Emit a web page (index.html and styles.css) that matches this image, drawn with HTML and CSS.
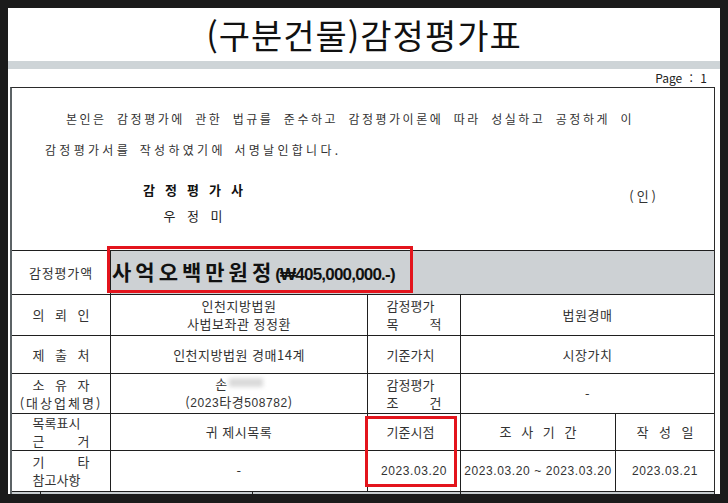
FILE: index.html
```html
<!DOCTYPE html>
<html lang="ko">
<head>
<meta charset="utf-8">
<title>(구분건물)감정평가표</title>
<link rel="stylesheet" href="styles.css">
</head>
<body>
<div class="sheet">
  <h1 class="title">(구분건물)감정평가표</h1>
  <div class="band"></div>
  <div class="pageno">Page : 1</div>
  <div class="box">
    <div class="oath">
      <p class="oath-text"><span class="l1">본인은 감정평가에 관한 법규를 준수하고 감정평가이론에 따라 성실하고 공정하게 이</span><span class="l2">감정평가서를 작성하였기에 서명날인합니다.</span></p>
      <div class="sign">
        <div class="signer">
          <div><span class="jl role">감 정 평 가 사</span></div>
          <div><span class="jl name">우 정 미</span></div>
        </div>
        <div class="seal">(인)</div>
      </div>
    </div>
    <div class="grid">
      <div class="cell"><span class="lbl-wide">감정평가액</span></div>
      <div class="cell amount"><span class="v"><span class="amt-ko">사억오백만원정</span><span class="amt-num">(₩405,000,000.-)</span></span></div>

      <div class="cell"><span class="jl">의 뢰 인</span></div>
      <div class="cell"><span class="v">인천지방법원<br>사법보좌관 정정환</span></div>
      <div class="cell"><span class="jl jr">감정평가<br>목 적</span></div>
      <div class="cell span2"><span class="v">법원경매</span></div>

      <div class="cell"><span class="jl">제 출 처</span></div>
      <div class="cell"><span class="v">인천지방법원 경매14계</span></div>
      <div class="cell"><span class="jl jr">기준가치</span></div>
      <div class="cell span2"><span class="v">시장가치</span></div>

      <div class="cell"><span class="v"><span class="jl">소 유 자</span><br><span class="owner-sub">(대상업체명)</span></span></div>
      <div class="cell"><span class="v">손<span class="blur"></span><br>(<span class="num">2023</span>타경<span class="num">508782</span>)</span></div>
      <div class="cell"><span class="jl jr">감정평가<br>조 건</span></div>
      <div class="cell span2"><span class="v">-</span></div>

      <div class="cell"><span class="jl">목록표시<br>근 거</span></div>
      <div class="cell"><span class="v">귀 제시목록</span></div>
      <div class="cell"><span class="jl jr">기준시점</span></div>
      <div class="cell"><span class="jl jc">조 사 기 간</span></div>
      <div class="cell"><span class="jl jd">작 성 일</span></div>

      <div class="cell"><span class="jl">기 타<br>참고사항</span></div>
      <div class="cell"><span class="v">-</span></div>
      <div class="cell"><span class="v num">2023.03.20</span></div>
      <div class="cell"><span class="v num">2023.03.20 ~ 2023.03.20</span></div>
      <div class="cell"><span class="v num">2023.03.21</span></div>
    </div>
    <div class="next">
      <div></div><div></div><div></div><div></div>
    </div>
  </div>
  <div class="mark mark-amount"></div>
  <div class="mark mark-date"></div>
</div>
</body>
</html>
```

FILE: styles.css
```css
html, body {
  margin: 0;
  padding: 0;
}
body {
  background: #1b1b1b;
  height: 503px;
  overflow: hidden;
  font-family: "Noto Sans CJK KR", "Noto Sans", sans-serif;
  color: #333;
}
.sheet {
  position: relative;
  margin: 8px 8px 0;
  height: 486px;
  background: #fff;
  overflow: hidden;
}
.title {
  margin: 0;
  height: 53px;
  line-height: 53px;
  text-align: center;
  font-size: 34px;
  font-weight: 400;
  letter-spacing: 1px;
  color: #111;
}
.band {
  height: 8px;
  background: #ced4d7;
}
.pageno {
  height: 18px;
  line-height: 18px;
  font-size: 12px;
  text-align: right;
  padding-right: 13px;
  word-spacing: 4px;
  color: #222;
}
.box {
  margin-left: 2px;
  width: 705px;
  height: 407px;
  box-sizing: border-box;
  border-top: 1px solid #2b2b2b;
  border-left: 2px solid #5c6366;
  border-right: 1px solid #2b2b2b;
  overflow: hidden;
}
.oath {
  height: 162px;
  box-sizing: border-box;
  padding-top: 15px;
}
.oath-text {
  margin: 0;
  padding: 0 80px 0 33px;
  font-size: 12px;
  line-height: 31px;
  color: #333;
}
.l1 {
  display: block;
  text-indent: 21px;
  text-align: justify;
  text-align-last: justify;
  letter-spacing: 2.5px;
  word-spacing: 1px;
}
.l2 {
  display: block;
  white-space: nowrap;
  letter-spacing: 3.3px;
  word-spacing: 2px;
}
.sign {
  display: flex;
  margin-top: 12px;
}
.signer {
  margin-left: 106px;
  width: 150px;
  text-align: center;
  font-size: 13px;
  line-height: 26px;
  color: #222;
}
.jl {
  display: inline-block;
  width: 57px;
  text-align: justify;
  text-align-last: justify;
  letter-spacing: 0;
}
.role {
  width: 100px;
  font-weight: 700;
  color: #111;
}
.name {
  width: 59px;
}
.seal {
  margin-left: auto;
  margin-right: 55px;
  margin-top: 6px;
  font-size: 13px;
  line-height: 26px;
  letter-spacing: 3px;
  color: #333;
}
.grid {
  display: grid;
  grid-template-columns: 98px 256px 92px 154px 98px;
  grid-template-rows: 43px 40px 37px 39px 36px 40px;
  gap: 1px;
  padding: 1px 0;
  background: #1f1f1f;
}
.cell {
  background: #fff;
  display: flex;
  align-items: center;
  justify-content: center;
  text-align: center;
  font-size: 13px;
  line-height: 18px;
  letter-spacing: 0.5px;
  color: #333;
}
.v {
  display: block;
  white-space: nowrap;
}
.span2 {
  grid-column: span 2;
}
.lbl-wide {
  letter-spacing: 0.8px;
}
.jr {
  width: 55px;
}
.jc {
  width: 77px;
}
.jd {
  width: 57px;
}
.owner-sub {
  letter-spacing: 2px;
}
.amount {
  grid-column: 2 / 6;
  background: #cdd1d4;
  justify-content: flex-start;
  padding-left: 1px;
  color: #111;
  font-weight: 700;
}
.amt-ko {
  font-size: 21px;
  letter-spacing: 4px;
  line-height: 24px;
}
.amt-num {
  font-family: "Liberation Sans", "Noto Sans", sans-serif;
  font-size: 17px;
  line-height: 24px;
  letter-spacing: -0.8px;
}
.num {
  font-family: "Liberation Sans", "Noto Sans", sans-serif;
  font-size: 12px;
  letter-spacing: 0.6px;
}
.blur {
  display: inline-block;
  width: 34px;
  height: 9px;
  margin-left: 1px;
  background: #dadada;
  filter: blur(2px);
  vertical-align: 2px;
}
.next {
  display: grid;
  grid-template-columns: 28px 211px 207px 253px;
  gap: 1px;
  height: 10px;
  background: #1f1f1f;
}
.next > div {
  background: #c8cdd0;
}
.mark {
  position: absolute;
  box-sizing: border-box;
  border: 3px solid #e3141c;
}
.mark-amount {
  left: 99px;
  top: 238px;
  width: 306px;
  height: 47px;
}
.mark-date {
  left: 357px;
  top: 408px;
  width: 92px;
  height: 71px;
}
```
